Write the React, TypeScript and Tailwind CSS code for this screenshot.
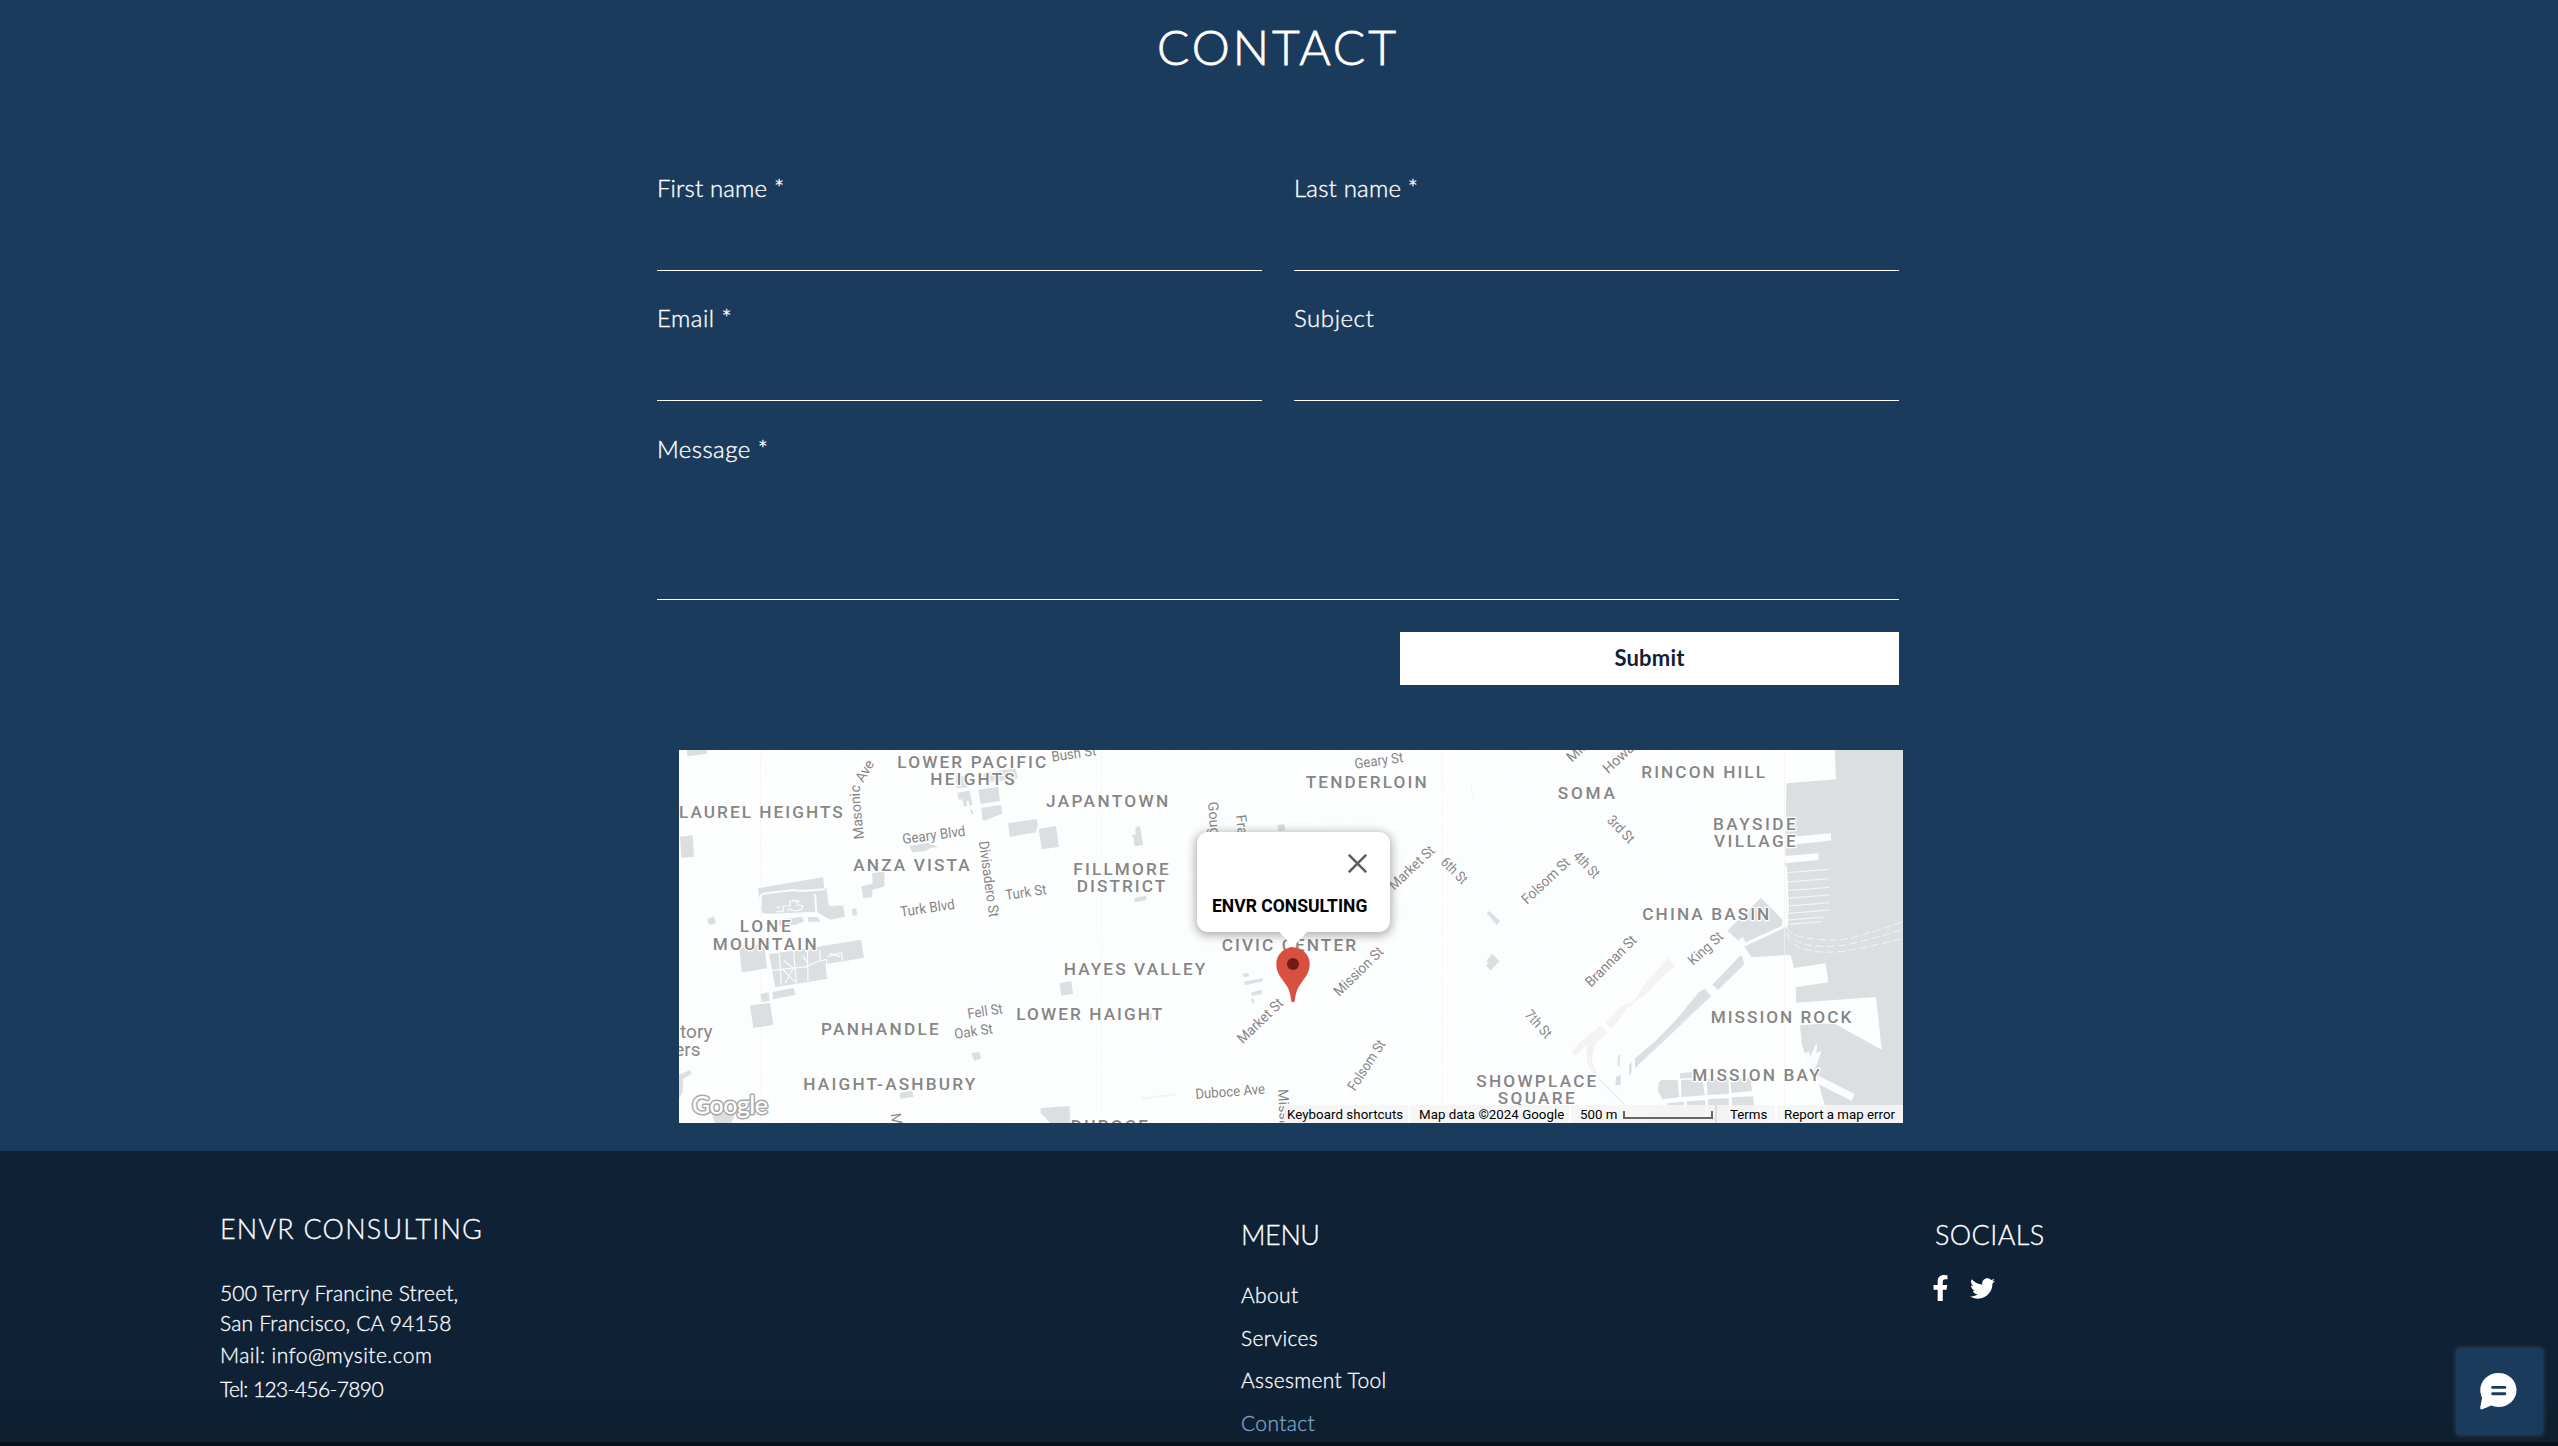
import React from "react";
import { FaFacebookF, FaTwitter } from "react-icons/fa";

type Area = [text: string, x1: number, x2: number, baseline: number];
type Street = [text: string, x1: number, y1: number, x2: number, y2: number];
type ClippedStreet = [text: string, x: number, y: number, angle: number];

const areas: Area[] = [
  ["LOWER PACIFIC", 898.3, 1044.3, 767.7],
  ["HEIGHTS", 931.3, 1012.7, 785],
  ["LAUREL HEIGHTS", 680, 840.7, 817.7],
  ["ANZA VISTA", 854.3, 967.7, 871],
  ["LONE", 740.7, 788.7, 932],
  ["MOUNTAIN", 713.7, 814.7, 949.7],
  ["PANHANDLE", 822, 936.7, 1035.3],
  ["HAIGHT-ASHBURY", 804.3, 973.3, 1090],
  ["JAPANTOWN", 1047, 1166.3, 807],
  ["TENDERLOIN", 1306.7, 1424.7, 788.3],
  ["FILLMORE", 1074.3, 1166.7, 875],
  ["DISTRICT", 1077.7, 1163.3, 892.3],
  ["CIVIC CENTER", 1222.7, 1354, 951],
  ["HAYES VALLEY", 1064.7, 1203.3, 975],
  ["LOWER HAIGHT", 1017.3, 1160.3, 1020],
  ["DUBOCE", 1071.7, 1146, 1132],
  ["SHOWPLACE", 1477.3, 1594.3, 1087],
  ["SQUARE", 1498.7, 1572.7, 1104],
  ["RINCON HILL", 1642.3, 1763, 778],
  ["SOMA", 1558.7, 1613, 799],
  ["BAYSIDE", 1714, 1793.7, 830],
  ["VILLAGE", 1715, 1793.7, 847.3],
  ["CHINA BASIN", 1643.3, 1767.3, 920],
  ["MISSION ROCK", 1711.7, 1849.3, 1023],
  ["MISSION BAY", 1693.3, 1817.7, 1080.7],
];

const streets: Street[] = [
  ["Bush St", 1052.3, 761.7, 1096.7, 755],
  ["Geary Blvd", 903, 844, 965.7, 835.7],
  ["Divisadero St", 978.7, 841.7, 989.3, 917.7],
  ["Turk Blvd", 901, 916.7, 955.3, 909],
  ["Turk St", 1006, 900, 1047, 894],
  ["Fell St", 968.3, 1018.7, 1003.3, 1013.3],
  ["Oak St", 955, 1039, 993.3, 1033.3],
  ["Geary St", 1355.3, 768.7, 1403.7, 762],
  ["Market St", 1394.3, 890.7, 1435.7, 851.7],
  ["6th St", 1440, 863, 1462, 885],
  ["Mission St", 1339.3, 997, 1384.3, 952.7],
  ["Market St", 1242.7, 1044.3, 1284.3, 1004.3],
  ["Folsom St", 1355, 1091.7, 1386, 1044],
  ["Duboce Ave", 1195.7, 1099, 1265.3, 1093.7],
  ["3rd St", 1606.3, 821, 1628.7, 844.3],
  ["4th St", 1572.3, 857, 1594, 879.3],
  ["Folsom St", 1527, 905, 1571, 863.7],
  ["Brannan St", 1591, 987.7, 1637.7, 941],
  ["King St", 1693.3, 966, 1724.3, 937.7],
  ["7th St", 1524, 1015.3, 1545.7, 1039.3],
];

const clippedStreets: ClippedStreet[] = [
  ["Masonic", 890.5, 1114, 80],
  ["Gough", 1208, 802, 86],
  ["Franklin", 1236, 815.3, 84],
  ["Mission", 1278, 1089.3, 87],
  ["Mission", 1571.7, 762.7, -42],
  ["Howard", 1608.3, 774.3, -43],
];

function MapCanvas() {
  return (
    <svg className="block h-[373px] w-[1224px] font-[Roboto,sans-serif]" viewBox="679 750 1224 373">
      <defs>
        <pattern id="blocks" width="34" height="22" patternUnits="userSpaceOnUse" patternTransform="rotate(-8)">
          <rect x="3" y="3" width="27" height="15" rx="1" fill="#fbfdfe" />
        </pattern>
        <pattern id="southBlocks" width="52" height="30" patternUnits="userSpaceOnUse" patternTransform="rotate(-44)">
          <rect x="3" y="3" width="45" height="23" rx="1" fill="#fbfdfe" />
        </pattern>
        <path id="masonic" d="M864.3 839 Q861 812 859.8 793 Q859.5 788 862 785 L878 758" />
      </defs>
      <rect x="679" y="750" width="1224" height="373" fill="#fdfefe" />
      <path d="M679 750H1500L1300 980V1123H679Z" fill="url(#blocks)" />
      <path d="M1500 750H1785V920L1600 1123H1300V980Z" fill="url(#southBlocks)" />
      <path d="M760.5 750V1123M1101.500 750V1123M1442.500 750V1123" stroke="#f8f8f6" />

      {/* western parks and campuses */}
      <g transform="translate(670 740) scale(.33333)" fill="#dcdfe2">
        <path d="M50 25h60v17l-58 7zM30 290l38-4 4 64-38 4zM113 536l20-7 4 22-18 4-6-8zM263 445l196-33 4 32 6 0 8 55 42-3 6 34-44 9-40-22-150 4-14-3z" />
        <path d="M325 540l70-10 8 14-24 10-50 4zM414 531l28 0 10 14-38 0zM546 508l12-4 4 20-14 4zM208 625l75-14 8 74-68 12-8-3z" />
        <path d="M297 643l130-20 146-24 9 54-115 20 4 44-155 25zM307 756l65-13 3 22-66 13zM272 762l24-6 3 26-24 5zM240 797l60-9 10 67-60 9z" />
        <path d="M606 400l38-6-1 45-36 11 0 22-27 3-6-36 34-8zM718 318l54-9 35 12-22 2-20 10-38 4z" />
        <path d="M857 110l30-3 6 35-33 3zM862 158l36-6 10 42-10 2-2-14-8 2 4 14-11 0-3-20-12 2zM900 210l6-2 4 14-6 0zM925 149l60-9 5 43-58 9zM934 203l60-8 2 26-54 21-5-3zM940 100l95-15 10 28-20 8-80 5z" />
        <path d="M1014 250l86-13 4 18-7 22-78 14zM1106 266l52-8 9 63-52 7zM1169 730l35-7 5 38-35 6zM903 940l26-4 4 20-20 6zM690 1058l36-6 5 18-40 6zM26 1005l35-15 3 12-24 14-2 40-12 20zM1112 1104l86-6 4 52-60 0-30-30zM125 1120l70 0-10 30-50 0z" />
        <g fill="none" stroke="#fbfcfd">
          <path d="M272 500L272 468Q275 461 290 460L370 450Q395 455 465 448M290 530Q330 522 435 520Q460 528 465 544M435 462L439 520" strokeWidth="6" />
          <path d="M320 515l20-2 0-15 20 0 0-15 20 0 2 12 16 2-4 12-20 4-14-6-10 4M330 502l-10 0M368 480l22 4M328 640l6 95M371 632l8 100M412 630l2 92M300 692l110-12 30-14 28-8M340 690l34 35M340 660l30 24M345 730l25-45M400 650l12 18M470 658l0 40M470 650l45-12 2 25M480 640l30 10M450 630v30" strokeWidth="3.500" />
        </g>
      </g>

      {/* central blocks */}
      <g transform="translate(1070 740) scale(.33333)" fill="#dcdfe2">
        <path d="M112 262M196 262l14-5 9 58-25 4-4-28-8-3 15-5zM192 474l36-7 2 12-35 8zM449 0M519 702l16-3 3 10-17 3zM522 724l56-9 1 8-54 13zM544 757l30-7 2 12-30 5zM543 776l6-2 5 14-6 4zM622 256l20-4 4 18-20 4zM237 820l8 0 0 22-8 0zM0 720l8 40-8 4z" />
        <path d="M215 1073l100-12 2 4-100 14zM1200 135l4 0 6 40-2 0z" fill="#f1f2f3" />
      </g>

      {/* bay, piers and the channel */}
      <g transform="translate(1480 740) scale(.33333)">
        <path d="M1064 25L1068 118L919 130L916 370L920 555L905 562L908 540L843 473L742 572L790 615L815 652L932 644L942 684L1037 670L1045 727L947 742L949 788L1188 771L1205 929L1062 850L960 855L966 915L978 950L1010 1010L1034 1095L1040 1149H1272V25Z" fill="#dcdfe2" />
        <path d="M935 290l118-10 0 21-38 5-100 10zM912 348l104-8 0 20-102 10zM1012 1006l112 56-9 20-100-50zM790 610l128-58 2 8-128 60z" fill="#fdfdfe" />
        <path d="M972 940l15-5 5 15 14-35 6-5-3 30 16-8-20 55-14 14zM776 598l14-6 8 20-12 4z" fill="#fafbfc" />
        <path d="M920 398l127-10M920 426l127-10M920 452l129-10M921 475l127-10M922 498l128-10M923 520l127-10M924 540l108-9M925 553l100-8" stroke="#f6f7f8" strokeWidth="3" />
        <path d="M920 562L923 500L918 380" fill="none" stroke="#fff" strokeWidth="6" />
        <path d="M920 565Q940 602 1080 600Q1140 590 1270 545M918 575Q950 630 1090 616Q1150 605 1270 568M920 585Q950 648 1090 634Q1150 625 1270 595" fill="none" stroke="#f2f4f5" strokeWidth="3" strokeDasharray="24 10" />
        <path d="M782 646Q795 658 790 676L714 750L697 734ZM674 746L694 768L465 985L465 955L530 900L590 838L655 758ZM447 975l8-8 0 30-8 10zM415 945l5 0-2 36-6-5zM408 1010l14-6 0 30-16 2z" fill="#dcdfe2" />
        <path d="M20 520l8-7 32 30-10 12zM18 665l18-23 22 22-26 27-14-14 8-8z" fill="#dcdfe2" />
        <path d="M564 654L586 678L535 722L495 765L445 800L395 868L377 850L420 800L460 785L500 725ZM362 857L382 880L348 910L335 950L325 950L318 915L285 948L275 938L300 905Z" fill="#f3f3f4" />
        <path d="M322 925Q320 980 350 1010L440 1100M335 915Q325 970 350 1000" fill="none" stroke="#f0f0f1" strokeWidth="5" />
        <path d="M660 800Q560 880 465 985" fill="none" stroke="#e6e8ea" strokeWidth="3" />
        <path d="M545 1020l48 0 5 52-50 6-14-24 2-26zM600 1000l36-4 0 18-36 2zM603 1020l65-2 6 48-70 5zM680 1018l65-2 2 46-65 3zM752 1015l60 0 4 38-62 6zM560 1090l52-5 3 64-35 0zM620 1084l55-4 3 70-56 0zM684 1078l62-4 2 75-62 0zM755 1072l65-3 5 80-68 0z" fill="#dcdfe2" />
        <path d="M498 1118l48-24 36 55-70 0z" fill="#e9eaeb" />
      </g>
      <path d="M1784.500 750V1123" stroke="#f3f3ec" strokeOpacity=".7" />

      <g fill="#868686" stroke="#fff" strokeWidth="2.500" strokeLinejoin="round" className="[paint-order:stroke]">
        <g fontSize="14.300">
          {streets.map(([text, x1, y1, x2, y2], i) => (
            <text
              key={i}
              transform={`translate(${x1} ${y1}) rotate(${(Math.atan2(y2 - y1, x2 - x1) * 180) / Math.PI})`}
              textLength={Math.hypot(x2 - x1, y2 - y1)}
              lengthAdjust="spacingAndGlyphs"
            >
              {text}
            </text>
          ))}
          {clippedStreets.map(([text, x, y, angle], i) => (
            <text key={i} transform={`translate(${x} ${y}) rotate(${angle})`}>
              {text}
            </text>
          ))}
          <text letterSpacing="-0.200">
            <textPath href="#masonic">Masonic Ave</textPath>
          </text>
        </g>
        <g fontSize="19">
          <text x="712.500" y="1038" textAnchor="end">tory</text>
          <text x="700.500" y="1056" textAnchor="end">ers</text>
        </g>
        <g fontSize="17.200" fontWeight="500">
          {areas.map(([text, x1, x2, y]) => (
            <text key={text + y} x={x1 - 1} y={y} textLength={x2 - x1 + 3}>
              {text}
            </text>
          ))}
        </g>
      </g>
      <text x="692" y="1114" fontSize="25" fontWeight="500" fill="#fff" stroke="#a9a9a9" strokeWidth="3" strokeLinejoin="round" textLength="76" className="[paint-order:stroke] font-[Lato,sans-serif]">
        Google
      </text>
    </svg>
  );
}

function MapPopup() {
  return (
    <div className="absolute left-[518px] top-[82px] h-[100px] w-[193px] rounded-[11px] bg-white font-[Roboto,sans-serif] shadow-[0_2px_10px_2px_rgba(0,0,0,0.3)]">
      <svg className="absolute left-[151px] top-[22px] size-[19px]" viewBox="0 0 19 19" stroke="#5f5f5f" strokeWidth="2.600">
        <path d="M.8 .8 18.200 18.200M18.200 .8 .8 18.200" />
      </svg>
      <p className="absolute left-[15px] top-[62px] whitespace-nowrap text-[17.500px] font-bold leading-6 tracking-[0.020px] text-black">ENVR CONSULTING</p>
      <svg className="absolute left-[78px] top-[99px] h-[74px] w-[36px]" viewBox="0 0 36 74">
        <path d="M3.500 0H33L18 16Z" fill="#fff" />
        <path d="M18 16.300a16.700 16.700 0 0 1 16.700 16.700c0 9.500-5 13.500-10.200 21.500-3.500 5.500-4 10.500-5 16.500h-3c-1-6-1.500-11-5-16.500C6.300 46.500 1.300 42.500 1.300 33A16.700 16.700 0 0 1 18 16.300Z" fill="#d85140" />
        <circle cx="18" cy="33" r="6" fill="#701b14" />
      </svg>
    </div>
  );
}

function MapAttribution() {
  return (
    <div className="absolute bottom-0 right-0 flex h-[18px] gap-[2px] whitespace-nowrap font-[Roboto,sans-serif] text-[13.300px] leading-[19px] text-black">
      <span className="w-[124px] bg-[#f5f5f5]/90 pl-[3px] tracking-[0.050px]">Keyboard shortcuts</span>
      <span className="w-[159px] bg-[#f5f5f5]/90 pl-[9px] tracking-[0.020px]">Map data ©2024 Google</span>
      <span className="flex w-[144px] items-center gap-[6px] bg-[#f5f5f5]/90 pl-[9px]">
        500 m
        <i className="mt-px h-[8px] w-[90px] border-x-2 border-b-2 border-[#666]" />
      </span>
      <span className="w-[58px] bg-[#f5f5f5]/90 pl-[13px]">Terms</span>
      <span className="w-[126px] bg-[#f5f5f5]/90 pl-[7px]">Report a map error</span>
    </div>
  );
}

function Field({ label, className }: { label: string; className: string }) {
  return (
    <label className={`border-b border-white text-2xl font-light leading-[32px] [-webkit-text-stroke:0.35px_white] ${className}`}>
      {label}
    </label>
  );
}

const menu = ["About", "Services", "Assesment Tool", "Contact"];

export default function App() {
  return (
    <div className="flex h-[1446px] w-full flex-col overflow-hidden bg-[#1b3b5c] font-[Lato,sans-serif] text-white">
      <main className="flex h-[1151px] flex-col">
        <h1 className="mt-[17px] pr-[2px] text-center text-[48px] font-light leading-[60px] tracking-[2.900px] [-webkit-text-stroke:0.8px_white]">
          CONTACT
        </h1>
        <form className="ml-[657px] mt-[95px] grid w-[1242px] grid-cols-2 gap-x-8">
          <Field label="First name *" className="h-[99px] tracking-[0.150px]" />
          <Field label="Last name *" className="h-[99px] tracking-[0.200px]" />
          <Field label="Email *" className="mt-[31px] h-[99px] tracking-[0.500px]" />
          <Field label="Subject" className="mt-[31px] h-[99px] tracking-[0.550px]" />
          <Field label="Message *" className="col-span-2 mt-8 h-[167px] tracking-[0.450px]" />
          <button type="button" className="col-span-2 mt-8 h-[53px] w-[499px] justify-self-end bg-white pb-[2px] text-[22px] font-bold tracking-[0.200px] text-[#0e2135]">
            Submit
          </button>
        </form>
        <section className="relative ml-[679px] mt-[65px] h-[373px] w-[1224px] overflow-hidden">
          <MapCanvas />
          <MapPopup />
          <MapAttribution />
        </section>
      </main>

      <footer className="relative grid h-[295px] grid-cols-[1021px_694px_1fr] border-b-4 border-[#07111b] bg-[linear-gradient(#0e2135_0,#0e2135_245px,#0d1f2f_291px)] pl-[220px] font-light [-webkit-text-stroke:0.3px_currentColor]">
        <section>
          <h2 className="mt-[62px] text-[27px] leading-[32px] tracking-[1.200px]">ENVR CONSULTING</h2>
          <address className="mt-[33px] text-[21px] not-italic leading-[30px] tracking-[0.180px]">
            <p>500 Terry Francine Street,</p>
            <p>San Francisco, CA 94158</p>
            <p className="mt-[2px] tracking-[0.450px]">Mail: info@mysite.com</p>
            <p className="mt-1 tracking-[-0.600px]">Tel: 123-456-7890</p>
          </address>
        </section>
        <section>
          <h2 className="mt-[68px] text-[27px] leading-[32px] tracking-[-0.400px]">MENU</h2>
          <ul className="mt-[23px] text-[21px] leading-[42.600px] tracking-[0.350px]">
            {menu.map((item) => (
              <li key={item} className="last:text-[#7fa6cb]">
                {item}
              </li>
            ))}
          </ul>
        </section>
        <section>
          <h2 className="mt-[68px] text-[27px] leading-[32px] tracking-[0.400px]">SOCIALS</h2>
          <div className="mt-[24px] flex items-center">
            <FaFacebookF className="-ml-[3px] h-[26px] w-[17px]" />
            <FaTwitter className="ml-[21px] size-[25px]" />
          </div>
        </section>
        <button type="button" aria-label="Chat" className="absolute right-[15px] top-[197px] flex size-[87px] items-center justify-center rounded bg-[#1b3b5c] shadow-[0_0_4px_1px_rgba(80,85,95,0.5)]">
          <svg className="mb-[2px] mr-[2px] size-[39px]" viewBox="0 0 40 40">
            <path d="M20 2C30.500 2 38.500 10 38.500 19.500S30.500 37 20 37C17 37 14.500 36.300 12.500 35.500L3.500 39.300C2 39.800 1 39 1.300 37.300L3.200 27.500C2 25 1.300 22.500 1.300 19.500 1.300 10 9.500 2 20 2Z" fill="#fff" />
            <path d="M14 16.800H26.500M14 23.300H26.500" stroke="#1b3b5c" strokeWidth="3" strokeLinecap="round" />
          </svg>
        </button>
      </footer>
    </div>
  );
}
